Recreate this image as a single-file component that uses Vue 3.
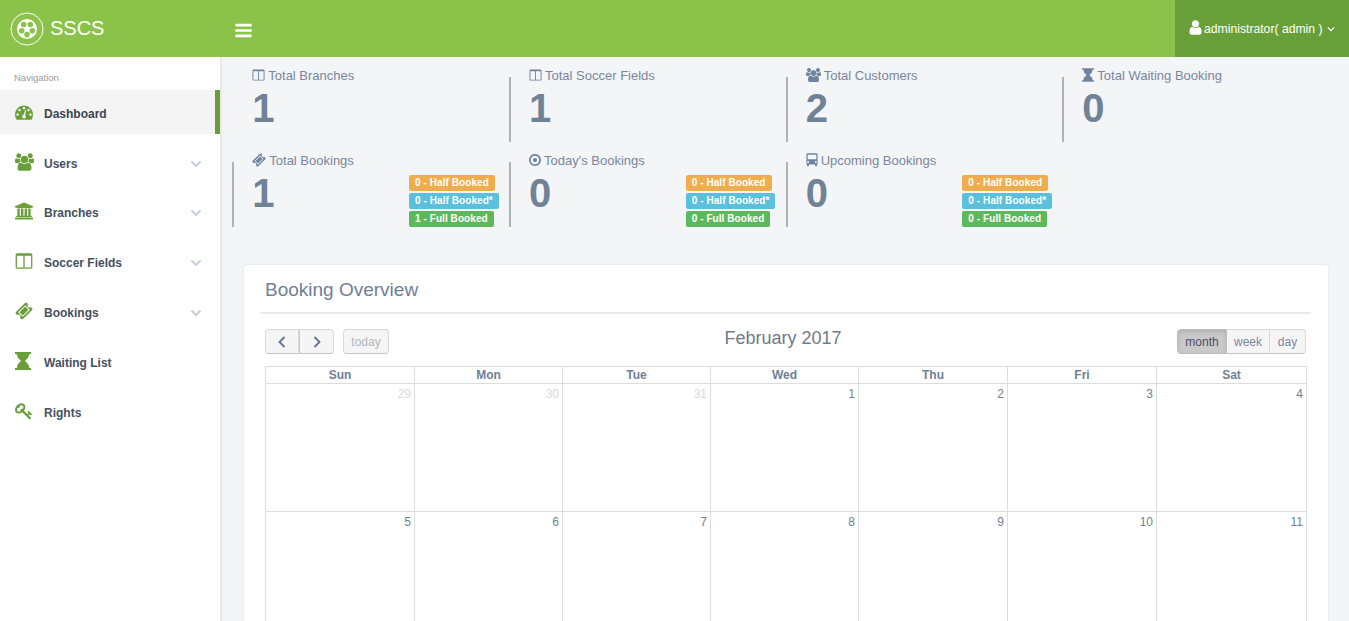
<template>
  <div class="page">
    <header class="topbar">
      <div class="brand">
        <svg class="logo" viewBox="0 0 36 36">
          <circle cx="18" cy="18" r="16" fill="none" stroke="#fff" stroke-width="1" />
          <circle cx="18" cy="18" r="10" fill="#fff" />
          <g fill="#8bc34a">
            <circle cx="21.300" cy="13.500" r="2.800" />
            <circle cx="23.300" cy="19.700" r="2.800" />
            <circle cx="18" cy="23.600" r="2.800" />
            <circle cx="12.700" cy="19.700" r="2.800" />
            <circle cx="14.700" cy="13.500" r="2.800" />
          </g>
        </svg>
        <span>SSCS</span>
      </div>
      <button class="toggle">
        <svg viewBox="0 0 1792 1792" fill="#fff"><path :d="icons.bars" /></svg>
      </button>
      <div class="user">
        <svg class="user-icon" viewBox="0 0 1792 1792" fill="#fff"><path :d="icons.user" /></svg>
        <span>administrator( admin )</span>
        <svg class="user-caret" viewBox="0 0 10 6"><path d="M1 1l4 4 4-4" fill="none" stroke="#fff" stroke-width="1.500" /></svg>
      </div>
    </header>

    <div class="body">
      <aside class="sidebar">
        <div class="nav-title">Navigation</div>
        <ul class="nav">
          <li v-for="item in navItems" :key="item.label" :class="['nav-item', { active: item.active }]">
            <span class="nav-icon-box">
              <svg class="nav-icon" :viewBox="item.box" :style="{ width: item.w + 'px' }"><path :d="icons[item.icon]" fill-rule="evenodd" /></svg>
            </span>
            <span class="nav-label">{{ item.label }}</span>
            <svg v-if="item.sub" class="nav-caret" viewBox="0 0 12 8"><path d="M1.500 1.500L6 6l4.500-4.500" fill="none" stroke="#c6d1dc" stroke-width="2.200" /></svg>
          </li>
        </ul>
      </aside>

      <main class="main">
        <section class="stats">
          <div v-for="(stat, i) in stats" :key="stat.label" :class="['stat', { first: i === 0 }]">
            <div class="stat-label">
              <svg :viewBox="stat.box" :style="{ width: stat.w + 'px' }"><path :d="icons[stat.icon]" fill-rule="evenodd" /></svg>
              <span>{{ stat.label }}</span>
            </div>
            <div class="stat-body">
              <div class="stat-count">{{ stat.count }}</div>
              <div v-if="stat.badges" class="badges">
                <span class="badge orange">{{ stat.badges[0] }} - Half Booked</span>
                <span class="badge blue">{{ stat.badges[1] }} - Half Booked*</span>
                <span class="badge green">{{ stat.badges[2] }} - Full Booked</span>
              </div>
            </div>
          </div>
        </section>

        <section class="card">
          <h2 class="card-title">Booking Overview</h2>
          <div class="cal">
            <div class="cal-toolbar">
              <div class="cal-left">
                <div class="btn-group">
                  <button class="btn arrow">
                    <svg viewBox="0 0 8 12"><path d="M6.500 1L1.500 6l5 5" fill="none" stroke="#5d7590" stroke-width="1.800" /></svg>
                  </button>
                  <button class="btn arrow">
                    <svg viewBox="0 0 8 12"><path d="M1.500 1l5 5-5 5" fill="none" stroke="#5d7590" stroke-width="1.800" /></svg>
                  </button>
                </div>
                <button class="btn today">today</button>
              </div>
              <div class="cal-title">February 2017</div>
              <div class="btn-group">
                <button class="btn view month selected">month</button>
                <button class="btn view week">week</button>
                <button class="btn view day">day</button>
              </div>
            </div>
            <table class="cal-table">
              <colgroup>
                <col v-for="(w, i) in colWidths" :key="i" :width="w" />
              </colgroup>
              <thead>
                <tr><th v-for="d in weekDays" :key="d">{{ d }}</th></tr>
              </thead>
              <tbody>
                <tr v-for="(week, w) in weeks" :key="w">
                  <td v-for="day in week" :key="day.n" :class="{ other: day.other }">{{ day.n }}</td>
                </tr>
              </tbody>
            </table>
          </div>
        </section>
      </main>
    </div>
  </div>
</template>

<script setup>
const icons = {
  bars: 'M1664 1344v128q0 26-19 45t-45 19h-1408q-26 0-45-19t-19-45v-128q0-26 19-45t45-19h1408q26 0 45 19t19 45zm0-512v128q0 26-19 45t-45 19h-1408q-26 0-45-19t-19-45v-128q0-26 19-45t45-19h1408q26 0 45 19t19 45zm0-512v128q0 26-19 45t-45 19h-1408q-26 0-45-19t-19-45v-128q0-26 19-45t45-19h1408q26 0 45 19t19 45z',
  user: 'M1536 1399q0 109-62.500 187t-150.500 78h-854q-88 0-150.500-78t-62.500-187q0-85 8.500-160.500t31.500-152 58.500-131 94-89 134.500-34.500q131 128 313 128t313-128q76 0 134.500 34.500t94 89 58.500 131 31.500 152 8.500 160.500zm-256-887q0 159-112.500 271.500t-271.500 112.500-271.500-112.500-112.500-271.500 112.500-271.500 271.500-112.500 271.500 112.500 112.500 271.500z',
  gauge: 'M384 1152q0-53-37.500-90.500t-90.500-37.500-90.500 37.500-37.500 90.500 37.500 90.500 90.500 37.500 90.500-37.500 37.500-90.500zm192-448q0-53-37.500-90.500t-90.500-37.500-90.500 37.500-37.500 90.500 37.500 90.500 90.500 37.500 90.500-37.500 37.500-90.500zm428 481l101-382q6-26-7.500-48.500t-38.500-29.500-48 6.500-30 39.500l-101 382q-60 5-107 43.500t-63 98.500q-20 77 20 146t117 89 146-20 89-117q16-60-6-117t-72-91zm660-33q0-53-37.500-90.500t-90.500-37.500-90.500 37.500-37.500 90.500 37.500 90.500 90.500 37.500 90.500-37.500 37.500-90.500zm-640-640q0-53-37.500-90.500t-90.500-37.500-90.500 37.500-37.500 90.500 37.500 90.500 90.500 37.500 90.500-37.500 37.500-90.500zm448 192q0-53-37.500-90.500t-90.500-37.500-90.500 37.500-37.500 90.500 37.500 90.500 90.500 37.500 90.500-37.500 37.500-90.500zm320 448q0 261-141 483-19 29-54 29h-1402q-35 0-54-29-141-221-141-483 0-182 71-348t191-286 286-191 348-71 348 71 286 191 191 286 71 348z',
  users: 'M593 896q-162 5-265 128h-134q-82 0-138-40.500t-56-118.500q0-353 124-353 6 0 43.500 21t97.500 42.500 119 21.500q67 0 133-23-5 37-5 66 0 139 81 256zm1071 637q0 120-73 189.500t-194 69.500h-874q-121 0-194-69.500t-73-189.500q0-53 3.500-103.500t14-109 26.500-108.500 43-97.500 62-81 85.500-53.500 111.500-20q10 0 43 21.500t73 48 107 48 135 21.500 135-21.500 107-48 73-48 43-21.500q61 0 111.500 20t85.500 53.500 62 81 43 97.500 26.500 108.500 14 109 3.500 103.500zm-1024-1277q0 106-75 181t-181 75-181-75-75-181 75-181 181-75 181 75 75 181zm704 384q0 159-112.500 271.500t-271.500 112.500-271.500-112.500-112.500-271.500 112.500-271.500 271.500-112.500 271.500 112.500 112.500 271.500zm576 225q0 78-56 118.500t-138 40.500h-134q-103-123-265-128 81-117 81-256 0-29-5-66 66 23 133 23 59 0 119-21.500t97.500-42.500 43.500-21q124 0 124 353zm-128-609q0 106-75 181t-181 75-181-75-75-181 75-181 181-75 181 75 75 181z',
  bank: 'M960 0l960 384v128h-128q0 26-20.500 45t-48.500 19h-1526q-28 0-48.500-19t-20.500-45h-128v-128zm-704 640h256v768h128v-768h256v768h128v-768h256v768h128v-768h256v768h59q28 0 48.500 19t20.500 45v64h-1664v-64q0-26 20.500-45t48.500-19h59v-768zm1595 960q28 0 48.500 19t20.500 45v128h-1920v-128q0-26 20.500-45t48.500-19h1782z',
  columns: 'M224 1536h608v-1152h-640v1120q0 13 9.500 22.500t22.500 9.500zm1376-32v-1120h-640v1152h608q13 0 22.500-9.500t9.500-22.500zm128-1216v1216q0 66-47 113t-113 47h-1344q-66 0-113-47t-47-113v-1216q0-66 47-113t113-47h1344q66 0 113 47t47 113z',
  ticket: 'M1024 452l316 316-572 572-316-316zm-211 979l618-618q19-19 19-45t-19-45l-362-362q-18-18-45-18t-45 18l-618 618q-19 19-19 45t19 45l362 362q18 18 45 18t45-18zm889-637l-907 908q-37 37-90.500 37t-90.500-37l-126-126q56-56 56-136t-56-136-136-56-136 56l-125-126q-37-37-37-90.500t37-90.500l907-906q37-37 90.500-37t90.500 37l125 125q-56 56-56 136t56 136 136 56 136-56l126 125q37 37 37 90.500t-37 90.500z',
  hourglass: 'M0 0H1536V192H1360Q1360 560 940 864Q1360 1168 1360 1536H1536V1728H0V1536H176Q176 1168 596 864Q176 560 176 192H0Z',
  key: 'M832 512q0-80-56-136t-136-56-136 56-56 136q0 42 19 83-41-19-83-19-80 0-136 56t-56 136 56 136 136 56 136-56 56-136q0-42-19-83 41 19 83 19 80 0 136-56t56-136zm851 704q0 17-49 66t-66 49q-9 0-28.500-16t-36.500-33-38.500-40-24.500-26l-96 96 220 220q28 28 28 68 0 42-39 81t-81 39q-40 0-68-28l-671-671q-176 131-365 131-163 0-265.500-102.500t-102.500-265.500q0-160 95-313t248-248 313-95q163 0 265.500 102.500t102.500 265.500q0 189-131 365l355 355 96-96q-3-3-26-24.500t-40-38.500-33-36.500-16-28.500q0-17 49-66t66-49q13 0 23 10 6 6 46 44.500t82 79.500 86.500 86 73 78 28.500 41z',
  dot: 'M1152 896q0 106-75 181t-181 75-181-75-75-181 75-181 181-75 181 75 75 181zm-256-544q-148 0-273 73t-198 198-73 273 73 273 198 198 273 73 273-73 198-198 73-273-73-273-198-198-273-73zm768 544q0 209-103 385.500t-279.500 279.500-385.500 103-385.500-103-279.500-279.500-103-385.500 103-385.500 279.500-279.500 385.500-103 385.500 103 279.500 279.500 103 385.500z',
  bus: 'M416 128h960q160 0 160 160v1008q0 64-64 96v144q0 64-64 64h-96q-64 0-64-64v-112H544v112q0 64-64 64h-96q-64 0-64-64v-144q-64-32-64-96V288q0-160 160-160zm32 176q-48 0-48 48v416q0 48 48 48h896q48 0 48-48V352q0-48-48-48zM448 1024a112 112 0 1 0 0 224 112 112 0 0 0 0-224zm896 0a112 112 0 1 0 0 224 112 112 0 0 0 0-224z'
}

const navItems = [
  { label: 'Dashboard', icon: 'gauge', box: '0 0 1792 1792', w: 18, active: true },
  { label: 'Users', icon: 'users', box: '0 0 1920 1792', w: 19, sub: true },
  { label: 'Branches', icon: 'bank', box: '0 0 1920 1792', w: 18, sub: true },
  { label: 'Soccer Fields', icon: 'columns', box: '0 0 1792 1792', w: 18, sub: true },
  { label: 'Bookings', icon: 'ticket', box: '0 0 1792 1792', w: 18, sub: true },
  { label: 'Waiting List', icon: 'hourglass', box: '0 0 1536 1728', w: 16 },
  { label: 'Rights', icon: 'key', box: '0 0 1792 1792', w: 18 }
]

const stats = [
  { label: 'Total Branches', icon: 'columns', box: '0 0 1792 1792', w: 13, count: 1 },
  { label: 'Total Soccer Fields', icon: 'columns', box: '0 0 1792 1792', w: 13, count: 1 },
  { label: 'Total Customers', icon: 'users', box: '0 0 1920 1792', w: 15, count: 2 },
  { label: 'Total Waiting Booking', icon: 'hourglass', box: '0 0 1536 1728', w: 12, count: 0 },
  { label: 'Total Bookings', icon: 'ticket', box: '0 0 1792 1792', w: 14, count: 1, badges: [0, 0, 1] },
  { label: "Today's Bookings", icon: 'dot', box: '128 128 1536 1536', w: 12, count: 0, badges: [0, 0, 0] },
  { label: 'Upcoming Bookings', icon: 'bus', box: '224 96 1344 1600', w: 12, count: 0, badges: [0, 0, 0] }
]

const weekDays = ['Sun', 'Mon', 'Tue', 'Wed', 'Thu', 'Fri', 'Sat']
const colWidths = [149, 148, 148, 148, 149, 149, 150]

const toDays = (list, other) => list.map((n) => ({ n, other }))

const weeks = [
  [...toDays([29, 30, 31], true), ...toDays([1, 2, 3, 4], false)],
  toDays([5, 6, 7, 8, 9, 10, 11], false)
]
</script>

<style>
html,
body {
  margin: 0;
  height: 100%;
  overflow: hidden;
}
</style>

<style scoped>
.page {
  height: 100vh;
  display: flex;
  flex-direction: column;
  font-family: "Liberation Sans", Arial, sans-serif;
  background: #f3f5f7;
  overflow: hidden;
}

.topbar {
  flex: 0 0 57px;
  display: flex;
  align-items: center;
  background: #8bc34a;
  color: #fff;
}

.brand {
  width: 234px;
  display: flex;
  align-items: center;
  gap: 5px;
  padding-left: 9px;
  box-sizing: border-box;
  font-size: 20px;
}

.logo {
  width: 36px;
  height: 36px;
}

.toggle {
  width: 19px;
  height: 19px;
  margin-top: 3px;
  padding: 0;
  border: 0;
  background: none;
}

.toggle svg {
  display: block;
  width: 19px;
  height: 19px;
}

.user {
  margin-left: auto;
  width: 174px;
  height: 100%;
  box-sizing: border-box;
  padding-left: 12px;
  display: flex;
  align-items: center;
  background: #689f38;
  font-size: 12.200px;
}

.user-icon {
  width: 17px;
  height: 17px;
  margin-bottom: 2px;
}

.user-caret {
  width: 8px;
  height: 6px;
  margin-left: 4px;
}

.body {
  flex: 1;
  display: flex;
  min-height: 0;
}

.sidebar {
  flex: 0 0 220px;
  background: #fff;
  border-right: 2px solid #e7e9ee;
}

.nav-title {
  padding: 15px 0 0 14px;
  height: 18px;
  font-size: 9.500px;
  line-height: 12px;
  color: #9a9a9a;
}

.nav {
  list-style: none;
  margin: 0;
  padding: 0;
  display: flex;
  flex-direction: column;
  gap: 6px;
}

.nav-item {
  height: 44px;
  display: flex;
  align-items: center;
  padding: 0 18px 0 15px;
  box-sizing: border-box;
  font-size: 12px;
  font-weight: 700;
  color: #46505f;
}

.nav-item:nth-child(3) {
  margin-top: -1px;
}

.nav-item.active {
  background: #f4f4f4;
  border-right: 5px solid #689f38;
  padding-right: 13px;
  color: #3c4452;
}

.nav-icon-box {
  flex: 0 0 29px;
  display: flex;
}

.nav-icon {
  height: 18px;
  fill: #689f38;
}

.nav-label {
  margin-top: 4px;
}

.nav-caret {
  width: 12px;
  height: 8px;
  margin: 4px 0 0 auto;
}

.main {
  flex: 1;
  min-width: 0;
  padding: 8px 20px 0 10.300px;
  box-sizing: border-box;
}

.stats {
  display: grid;
  grid-template-columns: repeat(4, 276.700px);
  grid-auto-rows: 85px;
}

.stat {
  position: relative;
  padding-left: 20px;
}

.stat::before {
  content: '';
  position: absolute;
  left: 0;
  top: 12px;
  width: 2px;
  height: 65px;
  background: #adb2b5;
}

.stat.first::before {
  display: none;
}

.stat-label {
  display: flex;
  align-items: center;
  gap: 3px;
  height: 20px;
  font-size: 13px;
  color: #7a869e;
}

.stat-label svg {
  height: 14px;
  fill: #6f84a0;
  flex: none;
}

.stat-body {
  display: flex;
  align-items: flex-start;
}

.stat-count {
  width: 156.700px;
  flex: none;
  font-size: 40px;
  line-height: 47px;
  font-weight: 700;
  color: #708296;
}

.badges {
  margin-top: 5px;
  display: flex;
  flex-direction: column;
  align-items: flex-start;
  gap: 2px;
}

.badge {
  height: 16px;
  padding: 0 6px;
  border-radius: 2px;
  font-size: 10px;
  line-height: 16px;
  font-weight: 700;
  letter-spacing: 0.070px;
  color: #fff;
  white-space: nowrap;
}

.orange {
  background: #f0ad4e;
}

.blue {
  background: #5bc0de;
}

.green {
  background: #5cb85c;
}

.card {
  margin: 29px 0 0 10.700px;
  background: #fff;
  border: 1px solid #ebecef;
  border-radius: 4px;
  padding: 0 17px 0 16px;
}

.card-title {
  margin: 0;
  height: 47px;
  padding-left: 5px;
  border-bottom: 2px solid #e8eaee;
  font-size: 19px;
  line-height: 50px;
  font-weight: 400;
  color: #6f7f99;
}

.cal {
  padding: 15px 5px 0 5px;
}

.cal-toolbar {
  display: flex;
  justify-content: space-between;
  align-items: flex-start;
  height: 37px;
}

.cal-left {
  display: flex;
  gap: 9px;
}

.cal-title {
  margin-top: -3px;
  font-size: 18px;
  line-height: 24px;
  color: #6f7a8c;
}

.btn-group {
  display: flex;
}

.btn {
  height: 25px;
  box-sizing: border-box;
  margin: 0;
  padding: 0;
  border: 1px solid #d9d9d9;
  border-bottom-color: #c4c4c4;
  background: #f5f5f5;
  font-family: inherit;
  font-size: 12px;
  color: #7a869e;
  border-radius: 0;
}

.btn-group .btn + .btn {
  border-left: 0;
}

.btn-group .btn:first-child {
  border-radius: 4px 0 0 4px;
}

.btn-group .btn:last-child {
  border-radius: 0 4px 4px 0;
}

.arrow {
  width: 34.500px;
  display: flex;
  align-items: center;
  justify-content: center;
}

.arrow svg {
  width: 8px;
  height: 12px;
}

.btn-group .arrow + .arrow {
  border-left: 1px solid #c9c9c9;
}

.today {
  width: 46px;
  border-radius: 4px;
  color: #aeb6c2;
}

.month {
  width: 50px;
}

.week {
  width: 43px;
}

.day {
  width: 36px;
}

.view.selected {
  background: #c9c9c9;
  border-color: #bdbdbd;
  box-shadow: inset 0 2px 4px rgba(0, 0, 0, 0.12);
  color: #4f4b66;
}

.cal-table {
  width: 1041px;
  border-collapse: collapse;
  table-layout: fixed;
}

.cal-table th,
.cal-table td {
  border: 1px solid #dddddd;
  color: #6f7f99;
  font-size: 12px;
}

.cal-table th {
  height: 16px;
  padding: 0;
  line-height: 16px;
  font-weight: 700;
  text-align: center;
}

.cal-table td {
  height: 128px;
  padding: 3px 3px 0 0;
  box-sizing: border-box;
  text-align: right;
  vertical-align: top;
}

.cal-table td.other {
  color: #d6dade;
}
</style>
